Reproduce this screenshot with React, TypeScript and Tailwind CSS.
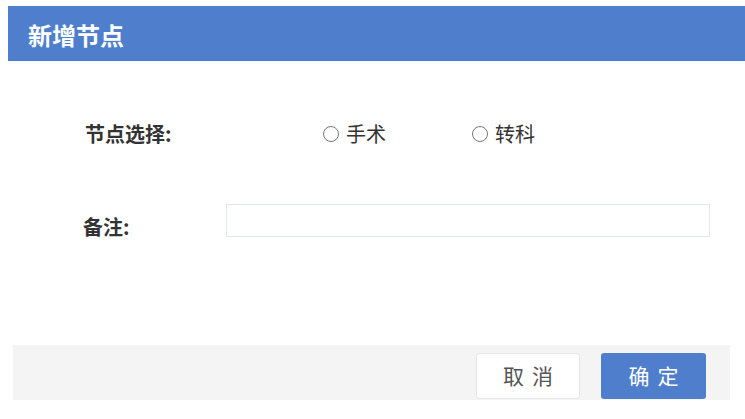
import { useState } from "react";

export default function App() {
  const [node, setNode] = useState("");
  const [remark, setRemark] = useState("");

  const options = ["手术", "转科"];

  return (
    <div
      className="w-[745px] h-[419px] overflow-hidden bg-white pt-[6px] pl-[8px]"
      style={{ fontFamily: '"Noto Sans CJK SC", "Noto Sans", sans-serif' }}
    >
      {/* Header */}
      <div className="h-[55px] bg-[#4f7fcc] flex items-center pl-[20px] pt-[2px]">
        <h1 className="text-[24px] font-bold text-white leading-none">新增节点</h1>
      </div>

      {/* Form */}
      <div className="h-[284px] pt-[58px]">
        <div className="flex items-center h-[30px]">
          <label className="ml-[77px] w-[238px] text-[20px] font-bold text-[#333]">节点选择:</label>
          <div className="flex items-center">
            {options.map((opt) => (
              <label
                key={opt}
                onClick={() => setNode(opt)}
                className="flex items-center w-[149px] cursor-pointer text-[20px] text-[#333]"
              >
                <span className="w-[16px] h-[16px] rounded-full border border-[#777] flex items-center justify-center mr-[7px]">
                  {node === opt && <span className="w-[8px] h-[8px] rounded-full bg-[#4f7fcc]" />}
                </span>
                {opt}
              </label>
            ))}
          </div>
        </div>

        <div className="flex items-start mt-[55px]">
          <label className="ml-[75px] w-[143px] text-[20px] font-bold text-[#333] pt-[8px]">备注:</label>
          <input
            value={remark}
            onChange={(e) => setRemark(e.target.value)}
            className="w-[484px] h-[33px] border border-[#e3e7ef] outline-none px-2 text-[14px]"
          />
        </div>
      </div>

      {/* Footer */}
      <div className="ml-[5px] w-[717px] h-[55px] bg-[#f4f4f4] flex justify-end items-start pt-[8px] pr-[24px] gap-[21px]">
        <button className="w-[104px] h-[46px] bg-white border border-[#e2e5ec] rounded-[3px] text-[21px] text-[#555] tracking-[8px] pl-[8px]">
          取消
        </button>
        <button className="w-[105px] h-[46px] bg-[#4f7fcc] rounded-[3px] text-[21px] text-white tracking-[8px] pl-[8px]">
          确定
        </button>
      </div>
    </div>
  );
}
